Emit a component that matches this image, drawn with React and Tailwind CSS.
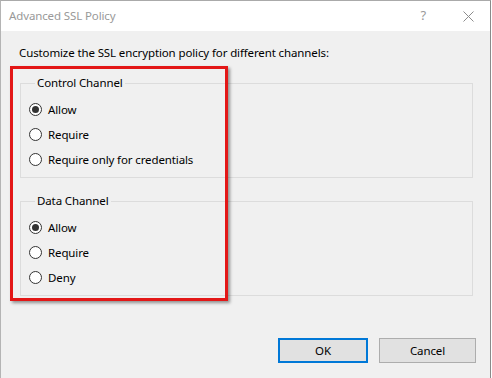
import React from "react";

function Radio({ label, checked }) {
  return (
    <div className="flex h-[25px] items-center">
      <span className="flex h-[13px] w-[13px] items-center justify-center rounded-full border border-[#333333] bg-white">
        {checked && <span className="h-[7px] w-[7px] rounded-full bg-[#333333]" />}
      </span>
      <span className="ml-[6px] leading-[16px]">{label}</span>
    </div>
  );
}

function Group({ title, items, className }) {
  return (
    <fieldset className={"mr-[17px] ml-[19px] border border-[#dcdcdc] pl-[8px] " + className}>
      <legend className="ml-[6px] px-[2px] leading-[16px]">{title}</legend>
      <div className="pt-[6px] pb-[5px]">
        {items.map((it) => (
          <Radio key={it.label} label={it.label} checked={it.checked} />
        ))}
      </div>
    </fieldset>
  );
}

export default function App() {
  return (
    <div
      className="relative h-[378px] w-[492px] overflow-hidden bg-white text-[11.5px] tracking-[-0.12px] text-black"
      style={{ fontFamily: '"Segoe UI", "Noto Sans", "Open Sans", sans-serif' }}
    >
      <div className="flex h-[378px] w-[491px] flex-col border-t border-l border-r border-t-[#aaaaaa] border-l-[#b4b4b4] border-r-[#8a8a8a]">
        <div className="flex h-[30px] shrink-0 items-center bg-white pl-[8px]">
          <span className="text-[11.5px] text-[#999999]">Advanced SSL Policy</span>
          <span className="ml-auto mr-[37px] text-[13px] text-[#999999]">?</span>
          <svg width="11" height="11" viewBox="0 0 11 11" className="mr-[16px]">
            <path d="M0.5 0.5 L10.5 10.5 M10.5 0.5 L0.5 10.5" stroke="#8c8c8c" strokeWidth="1" />
          </svg>
        </div>
        <div className="flex grow flex-col bg-[#f0f0f0]">
          <div className="mt-[14px] pl-[18px] leading-[16px]">
            Customize the SSL encryption policy for different channels:
          </div>
          <Group
            title="Control Channel"
            className="mt-[14px]"
            items={[
              { label: "Allow", checked: true },
              { label: "Require" },
              { label: "Require only for credentials" },
            ]}
          />
          <Group
            title="Data Channel"
            className="mt-[15px]"
            items={[
              { label: "Allow", checked: true },
              { label: "Require" },
              { label: "Deny" },
            ]}
          />
          <div className="mt-auto mb-[15px] flex justify-end gap-[11px] pr-[14px]">
            <button className="h-[25px] w-[90px] border-2 border-[#0078d7] bg-[#e1e1e1] leading-[16px]">OK</button>
            <button className="h-[25px] w-[97px] border border-[#adadad] bg-[#e1e1e1] leading-[16px]">Cancel</button>
          </div>
        </div>
      </div>
      <div className="absolute top-[66px] left-[10px] h-[235px] w-[218px] border-[3px] border-[#e31717] shadow-[2px_2px_3px_rgba(0,0,0,0.4)]" />
    </div>
  );
}
